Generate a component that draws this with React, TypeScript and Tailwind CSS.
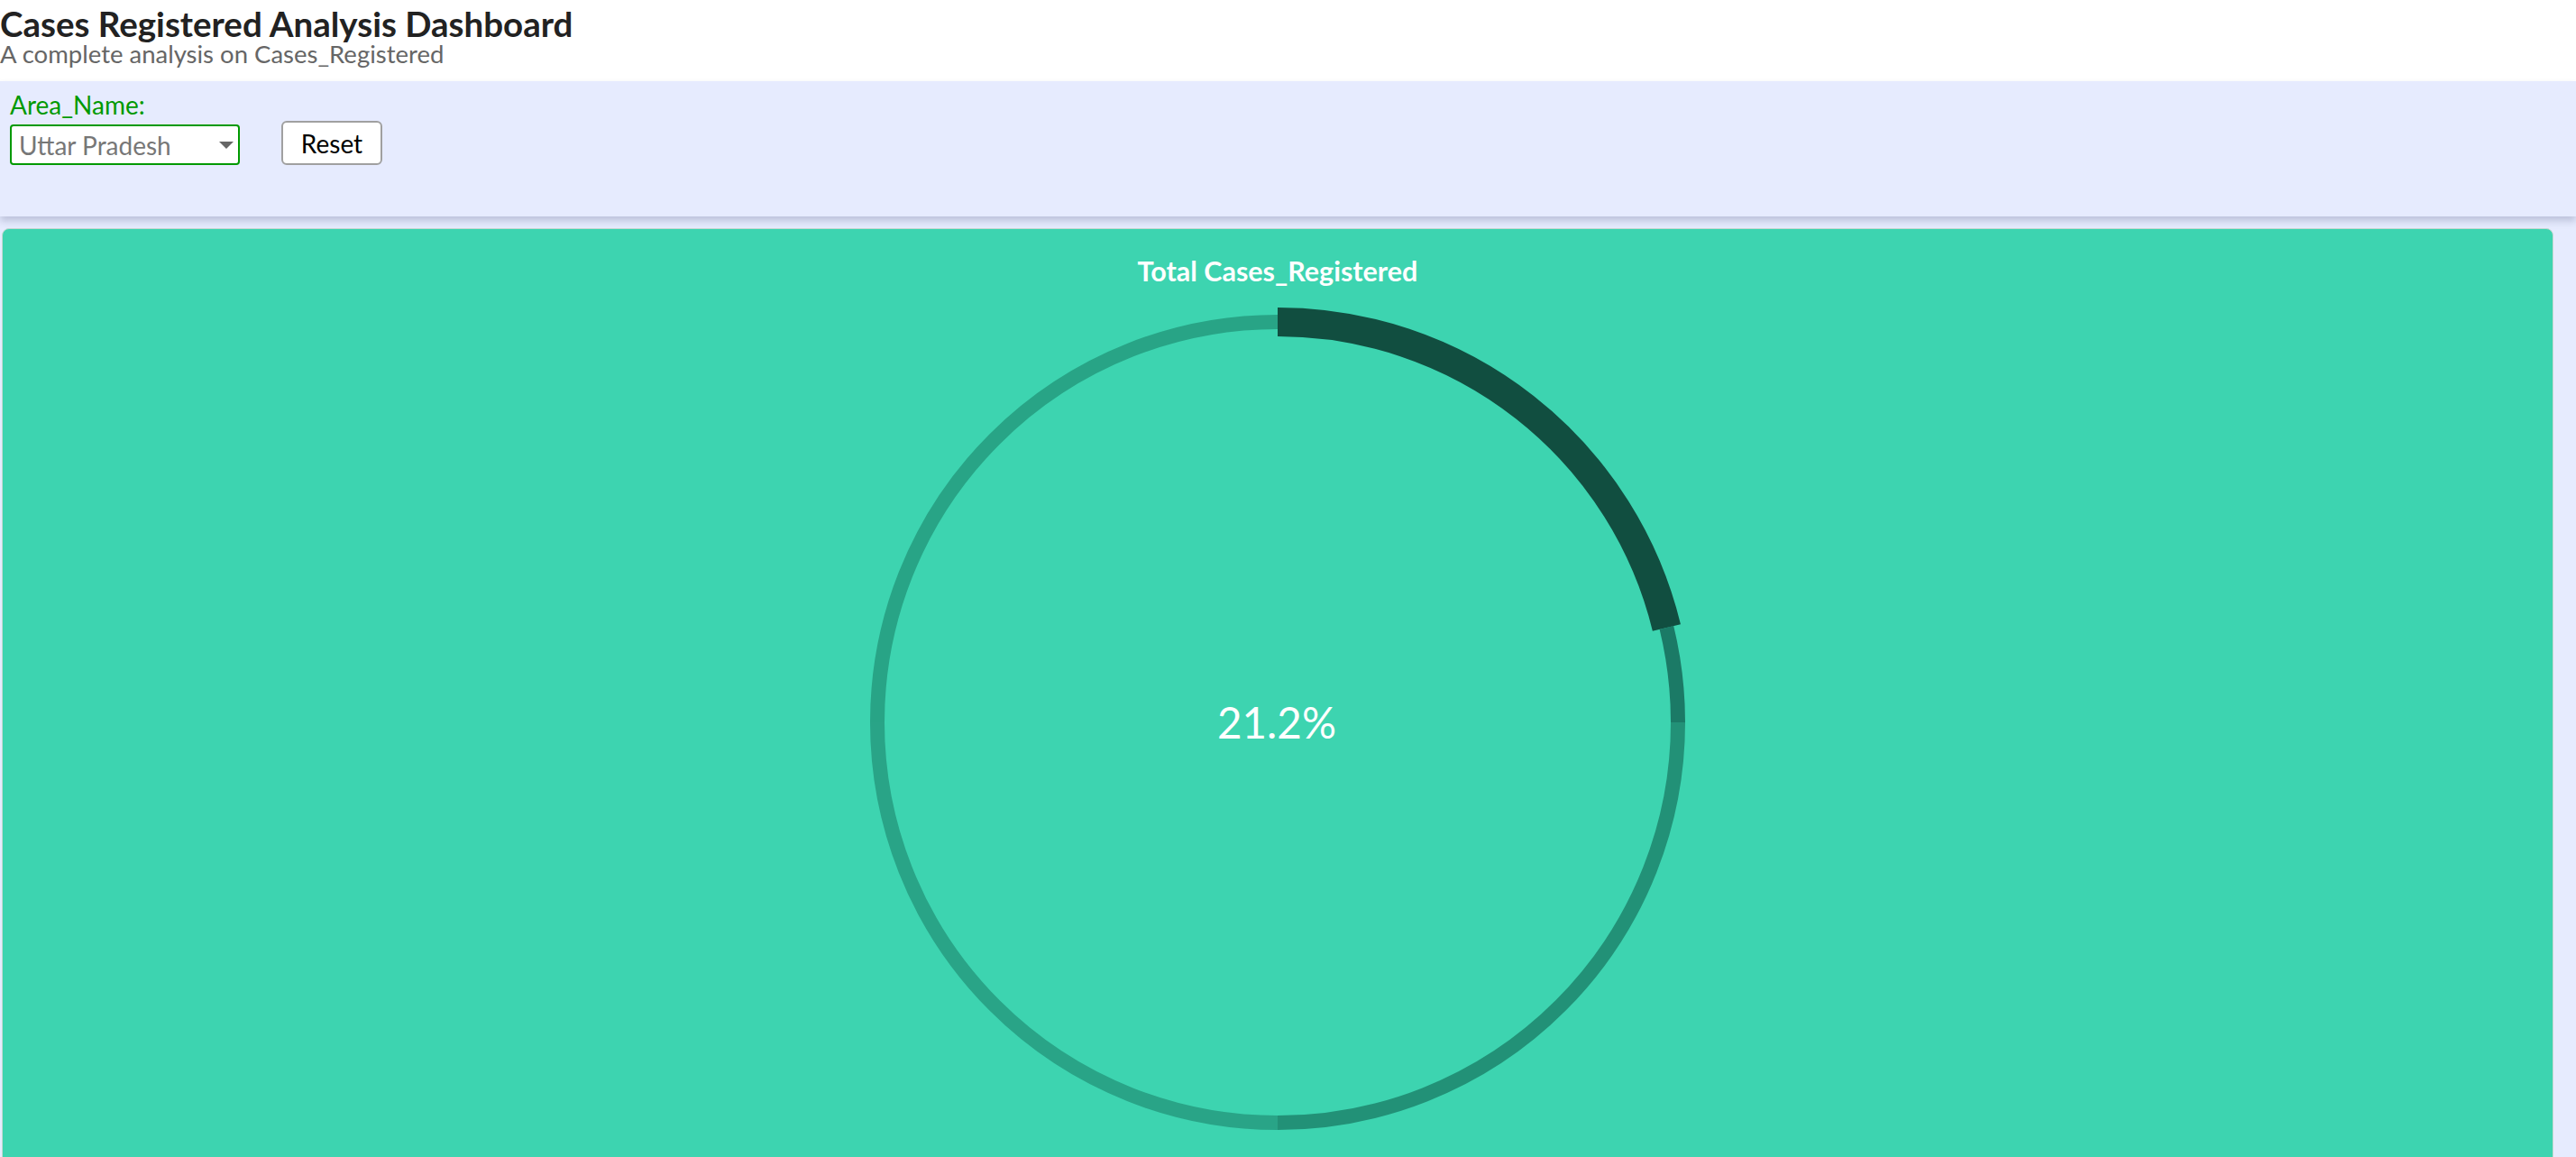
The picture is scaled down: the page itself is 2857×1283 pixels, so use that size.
import React from "react";

const AREAS = ["Uttar Pradesh", "Maharashtra", "Madhya Pradesh", "Rajasthan", "Bihar"];

const CX = 470;
const CY = 470;
const R = 444;

function point(deg: number) {
  const rad = (deg * Math.PI) / 180;
  return { x: CX + R * Math.sin(rad), y: CY - R * Math.cos(rad) };
}

// arc from a to b degrees, clockwise from 12 o'clock
function arc(a: number, b: number) {
  const p1 = point(a);
  const p2 = point(b);
  const large = b - a > 180 ? 1 : 0;
  return `M ${p1.x} ${p1.y} A ${R} ${R} 0 ${large} 1 ${p2.x} ${p2.y}`;
}

function Gauge({ value }: { value: number }) {
  const end = (value / 100) * 360;

  return (
    <svg width={940} height={940} viewBox="0 0 940 940">
      <path d={arc(end, 90)} fill="none" stroke="#1b7a66" strokeWidth={16} />
      <path d={arc(90, 180)} fill="none" stroke="#229177" strokeWidth={16} />
      <path d={arc(180, 270)} fill="none" stroke="#29a487" strokeWidth={16} />
      <path d={arc(270, 360)} fill="none" stroke="#28a486" strokeWidth={16} />
      <path d={arc(0, end)} fill="none" stroke="#114e40" strokeWidth={32} />
      <text
        x={CX - 1}
        y={488}
        textAnchor="middle"
        fill="#ffffff"
        fontSize={47.5}
        fontFamily="Lato, sans-serif"
      >
        {value.toFixed(1)}%
      </text>
    </svg>
  );
}

export default function App() {
  const [area, setArea] = React.useState("Uttar Pradesh");

  return (
    <div className="min-h-screen bg-[#e6ebfe] font-['Lato',sans-serif] overflow-hidden">
      <div className="bg-white h-[90px]">
        <h1 className="pt-[6px] text-[38.5px] leading-[40px] font-bold text-[#222]">
          Cases Registered Analysis Dashboard
        </h1>
        <p className="text-[27.5px] leading-[28px] text-[#666]">
          A complete analysis on Cases_Registered
        </p>
      </div>

      <div className="relative z-10 h-[150px] bg-[#e6ebfe] shadow-[0_5px_8px_rgba(40,50,90,0.22)] pl-[11px] pt-[10px]">
        <div className="flex items-end gap-[46px]">
          <div className="flex flex-col">
            <label
              htmlFor="area"
              className="text-[28px] leading-[32px] text-[#009900]"
            >
              Area_Name:
            </label>
            <div className="relative mt-[6px] w-[255px] h-[45px]">
              <select
                id="area"
                value={area}
                onChange={(e) => setArea(e.target.value)}
                className="appearance-none w-full h-full bg-white border-2 border-[#009900] rounded-[4px] pl-[8px] text-[28px] text-[#777] outline-none"
              >
                {AREAS.map((a) => (
                  <option key={a} value={a}>
                    {a}
                  </option>
                ))}
              </select>
              <span className="pointer-events-none absolute right-[7px] top-[19px] w-0 h-0 border-l-[8px] border-r-[8px] border-t-[8px] border-l-transparent border-r-transparent border-t-[#666]" />
            </div>
          </div>
          <button
            onClick={() => setArea("Uttar Pradesh")}
            className="w-[112px] h-[49px] bg-white border-2 border-[#a0a0a0] rounded-[6px] text-[28px] text-black"
          >
            Reset
          </button>
        </div>
      </div>

      <div className="pl-[2px] pr-[25px] pt-[13px]">
        <div className="h-[1100px] bg-[#3dd4b0] rounded-[8px] border border-[#c8d8d2] flex flex-col items-center">
          <h2 className="mt-[28px] text-[30.5px] leading-[36px] font-bold text-white">
            Total Cases_Registered
          </h2>
          <div className="mt-[13px]">
            <Gauge value={21.2} />
          </div>
        </div>
      </div>
    </div>
  );
}
